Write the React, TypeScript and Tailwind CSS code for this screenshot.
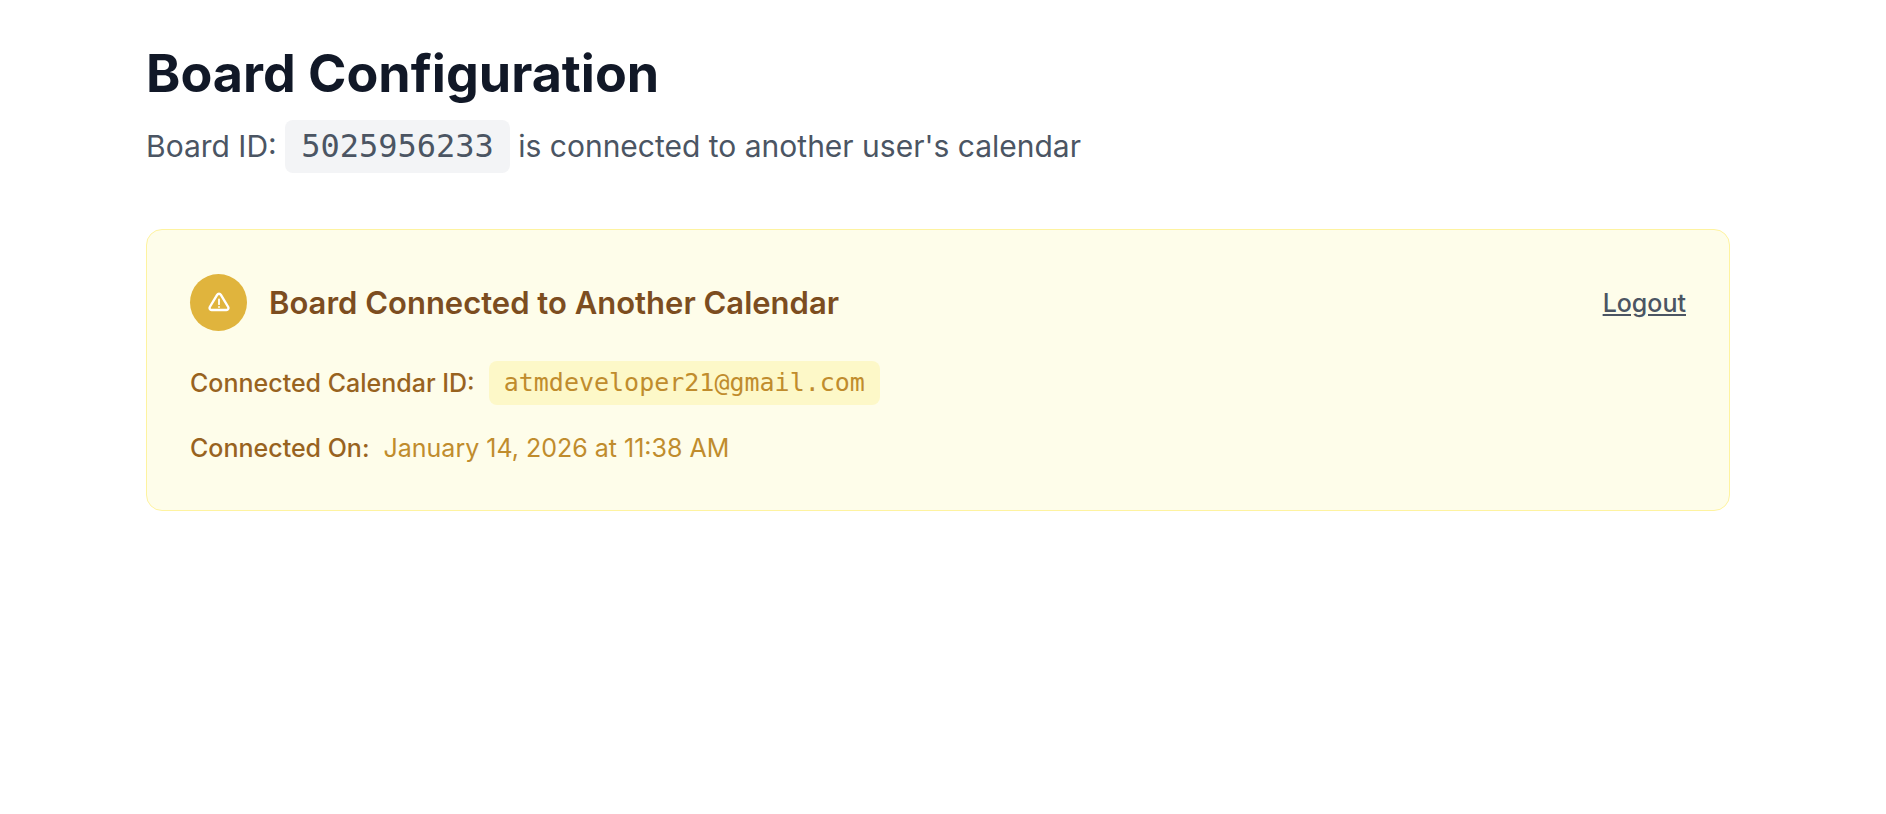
export default function App() {
  return (
    <main className="min-h-screen bg-white pr-[156px] pl-[146px] pt-11 pb-16 font-['Inter',sans-serif]">
      <div className="flex w-full flex-col">
        <h1 className="text-[52px] leading-[60px] font-bold text-[#111827]">
          Board Configuration
        </h1>
        <p className="mt-4 text-[30px] leading-[53px] text-[#4b5563]">
          Board ID:{' '}
          <code className="inline-block rounded-lg bg-[#f3f4f6] px-4 align-top font-['DejaVu_Sans_Mono',monospace] text-[32px]">
            5025956233
          </code>{' '}
          is connected to another user's calendar
        </p>

        <section className="mt-14 flex flex-col rounded-2xl border border-[#fef3a0] bg-[#fefdea] px-[43px] py-11">
          <div className="flex items-center justify-between">
            <div className="flex items-center gap-[22px]">
              <span className="flex size-[57px] items-center justify-center rounded-full bg-[#e0b43d]">
                <svg
                  className="size-6"
                  viewBox="0 0 24 24"
                  fill="none"
                  stroke="#ffffff"
                  strokeLinecap="round"
                  strokeLinejoin="round"
                  aria-hidden="true"
                >
                  <path
                    strokeWidth="2.4"
                    d="M10.1 3.8 2.8 16a2 2 0 0 0 1.7 3h15a2 2 0 0 0 1.7-3L13.9 3.8a2.2 2.2 0 0 0-3.8 0Z"
                  />
                  <path strokeWidth="1.8" d="M12 8.4v4.8M12 16h.01" />
                </svg>
              </span>
              <h2 className="text-[31px] leading-10 font-semibold text-[#7c4d1f]">
                Board Connected to Another Calendar
              </h2>
            </div>
            <button type="button" className="text-[25px] leading-9 font-medium text-[#4b5563] underline">
              Logout
            </button>
          </div>

          <dl className="mt-[30px] flex flex-col gap-[25px] text-[25px] leading-9">
            <div className="flex items-center gap-3.5">
              <dt className="font-medium text-[#98631f]">Connected Calendar ID:</dt>
              <dd className="rounded-lg bg-[#fdf8c8] px-[15px] py-1 font-['DejaVu_Sans_Mono',monospace] text-[#c08c2d]">
                atmdeveloper21@gmail.com
              </dd>
            </div>
            <div className="flex items-center gap-3.5">
              <dt className="font-medium text-[#98631f]">Connected On:</dt>
              <dd className="text-[#c08c2d]">January 14, 2026 at 11:38 AM</dd>
            </div>
          </dl>
        </section>
      </div>
    </main>
  );
}
